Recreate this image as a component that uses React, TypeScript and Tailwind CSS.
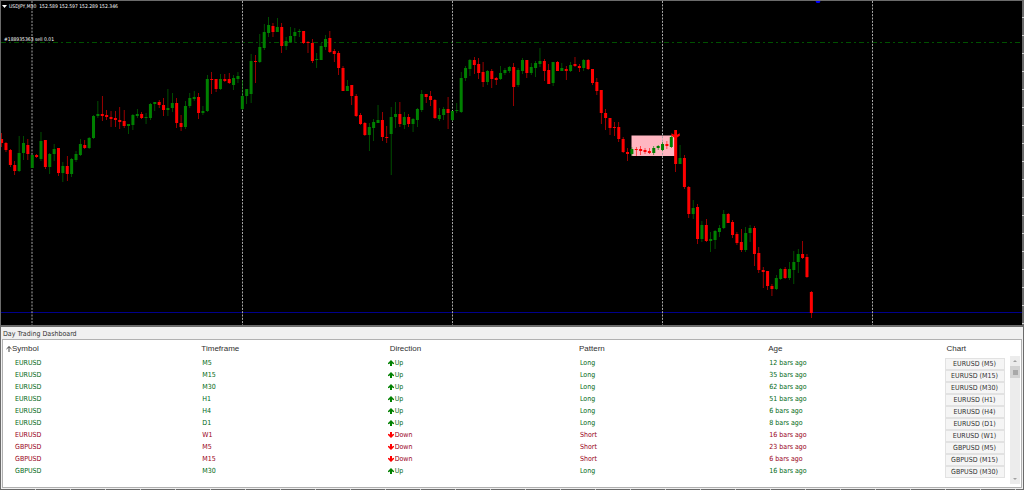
import React from 'react';

type Candle = [dir: 'u' | 'd', high: number, top: number, bottom: number, low: number];

// one entry per 30 minute bar, oldest first
const candles: Candle[] = [
  ['d', 133, 139, 143, 147], ['d', 142, 143, 150, 152], ['d', 149, 150, 165, 167], ['d', 161, 165, 171, 175],
  ['u', 136, 153, 171, 172], ['u', 136, 143, 153, 160], ['d', 139, 145, 154, 160], ['u', 155, 155, 168, 168],
  ['d', 154, 155, 157, 158], ['u', 132, 141, 159, 161], ['d', 140, 140, 167, 169], ['u', 153, 154, 167, 174],
  ['u', 144, 149, 154, 161], ['d', 148, 148, 173, 176], ['u', 162, 166, 173, 182], ['d', 156, 166, 174, 181],
  ['u', 158, 159, 174, 177], ['u', 151, 154, 160, 162], ['u', 139, 144, 155, 156], ['d', 140, 145, 148, 149],
  ['u', 137, 138, 148, 149], ['u', 115, 116, 138, 139], ['u', 101, 114, 116, 118], ['d', 96, 114, 116, 121],
  ['d', 110, 115, 117, 120], ['d', 111, 117, 119, 127], ['d', 111, 118, 120, 127], ['d', 107, 120, 122, 129],
  ['d', 110, 121, 126, 128], ['u', 124, 124, 126, 134], ['u', 114, 115, 125, 130], ['u', 109, 114, 116, 118],
  ['d', 112, 114, 118, 119], ['u', 113, 117, 118, 124], ['u', 103, 104, 118, 120], ['u', 102, 102, 104, 111],
  ['d', 100, 102, 105, 108], ['d', 98, 105, 110, 116], ['u', 89, 108, 110, 116], ['u', 93, 103, 108, 112],
  ['d', 98, 103, 123, 128], ['d', 115, 123, 127, 131], ['u', 101, 106, 127, 129], ['u', 93, 98, 106, 108],
  ['u', 91, 97, 99, 101], ['d', 93, 97, 113, 119], ['u', 106, 111, 113, 115], ['u', 75, 79, 111, 112],
  ['d', 72, 79, 80, 94], ['d', 79, 79, 89, 92], ['u', 74, 79, 89, 90], ['d', 74, 79, 81, 82],
  ['d', 73, 79, 83, 84], ['u', 75, 78, 85, 90], ['u', 72, 76, 79, 83], ['u', 80, 96, 109, 110],
  ['u', 89, 89, 96, 104], ['u', 54, 61, 94, 103], ['d', 55, 61, 62, 83], ['u', 34, 47, 62, 63],
  ['u', 24, 32, 48, 50], ['u', 17, 25, 33, 37], ['d', 23, 26, 32, 37], ['u', 18, 27, 32, 32],
  ['d', 23, 27, 46, 53], ['u', 37, 41, 46, 50], ['u', 27, 36, 42, 43], ['u', 28, 32, 36, 43],
  ['u', 29, 31, 32, 37], ['d', 31, 31, 43, 44], ['d', 41, 42, 43, 53], ['d', 39, 43, 61, 63],
  ['u', 53, 59, 60, 68], ['u', 43, 46, 60, 60], ['u', 35, 39, 47, 50], ['d', 31, 38, 52, 53],
  ['d', 49, 51, 54, 62], ['d', 51, 53, 68, 75], ['d', 66, 68, 91, 91], ['u', 80, 86, 91, 91],
  ['d', 85, 85, 96, 105], ['d', 94, 96, 116, 117], ['d', 113, 115, 124, 125], ['d', 122, 123, 135, 136],
  ['u', 123, 127, 135, 151], ['u', 119, 122, 128, 141], ['u', 105, 120, 123, 123], ['d', 112, 120, 137, 141],
  ['d', 126, 137, 138, 143], ['u', 107, 117, 134, 175], ['u', 102, 114, 117, 128], ['d', 102, 114, 124, 127],
  ['u', 112, 117, 125, 129], ['d', 114, 117, 124, 127], ['u', 118, 119, 124, 132], ['u', 108, 109, 120, 127],
  ['u', 90, 94, 110, 112], ['d', 94, 94, 97, 103], ['d', 91, 96, 100, 106], ['d', 99, 100, 118, 119],
  ['u', 108, 115, 119, 121], ['u', 107, 109, 115, 120], ['d', 97, 109, 113, 129], ['u', 111, 111, 120, 121],
  ['u', 103, 110, 111, 113], ['u', 72, 78, 112, 113], ['u', 66, 68, 78, 81], ['u', 59, 60, 69, 76],
  ['d', 57, 60, 65, 74], ['d', 58, 64, 73, 79], ['d', 62, 72, 82, 87], ['u', 70, 71, 82, 85],
  ['d', 69, 71, 79, 88], ['d', 77, 78, 80, 85], ['u', 66, 73, 79, 80], ['u', 68, 70, 73, 75],
  ['u', 66, 67, 71, 73], ['d', 63, 67, 87, 106], ['u', 68, 70, 85, 87], ['u', 58, 60, 71, 74],
  ['d', 60, 60, 73, 78], ['u', 63, 67, 73, 75], ['u', 61, 63, 68, 77], ['u', 48, 61, 64, 67],
  ['d', 59, 61, 71, 81], ['d', 64, 70, 84, 84], ['u', 62, 62, 83, 86], ['d', 61, 62, 71, 71],
  ['u', 63, 68, 71, 71], ['d', 66, 69, 71, 80], ['u', 62, 65, 71, 72], ['d', 57, 64, 66, 67],
  ['d', 64, 66, 68, 72], ['u', 59, 60, 68, 71], ['d', 59, 60, 69, 70], ['d', 69, 69, 83, 85],
  ['d', 78, 82, 91, 95], ['d', 90, 90, 113, 124], ['d', 109, 113, 118, 130], ['d', 118, 118, 128, 135],
  ['d', 122, 127, 128, 136], ['d', 122, 127, 139, 142], ['d', 137, 139, 152, 153], ['d', 148, 152, 154, 161],
  ['u', 147, 149, 154, 156], ['d', 147, 149, 150, 156], ['d', 146, 149, 151, 155], ['d', 148, 150, 152, 154],
  ['d', 148, 151, 153, 154], ['u', 146, 148, 153, 155], ['u', 145, 146, 148, 150], ['u', 142, 144, 150, 151],
  ['d', 141, 144, 146, 149], ['u', 136, 137, 147, 148], ['d', 130, 137, 164, 172], ['u', 145, 158, 164, 164],
  ['d', 155, 158, 187, 189], ['d', 186, 187, 214, 218], ['u', 200, 208, 214, 219], ['d', 204, 207, 239, 244],
  ['u', 221, 225, 239, 242], ['d', 219, 225, 241, 242], ['u', 232, 239, 241, 252], ['u', 230, 231, 240, 249],
  ['u', 225, 228, 232, 237], ['u', 210, 214, 228, 229], ['d', 213, 214, 223, 223], ['d', 220, 222, 235, 238],
  ['d', 232, 234, 243, 245], ['d', 229, 242, 250, 252], ['u', 227, 233, 250, 252], ['u', 225, 228, 233, 242],
  ['d', 226, 228, 254, 266], ['d', 247, 253, 270, 273], ['d', 267, 270, 272, 288], ['d', 271, 271, 286, 290],
  ['d', 284, 286, 289, 296], ['u', 275, 278, 289, 290], ['u', 268, 269, 279, 280], ['d', 267, 269, 278, 279],
  ['u', 262, 269, 278, 280], ['u', 251, 262, 270, 284], ['u', 249, 254, 262, 273], ['d', 241, 254, 258, 259],
  ['d', 254, 257, 277, 278], ['d', 291, 292, 313, 318],
];

const BAR_STEP = 4.377;
const FIRST_BAR_X = 1.6;
const dayLines = [31.5, 242, 452, 662, 872];

const signals = [
  { symbol: 'EURUSD', timeframe: 'M5', up: true, age: 12 },
  { symbol: 'EURUSD', timeframe: 'M15', up: true, age: 35 },
  { symbol: 'EURUSD', timeframe: 'M30', up: true, age: 62 },
  { symbol: 'EURUSD', timeframe: 'H1', up: true, age: 51 },
  { symbol: 'EURUSD', timeframe: 'H4', up: true, age: 6 },
  { symbol: 'EURUSD', timeframe: 'D1', up: true, age: 8 },
  { symbol: 'EURUSD', timeframe: 'W1', up: false, age: 16 },
  { symbol: 'GBPUSD', timeframe: 'M5', up: false, age: 23 },
  { symbol: 'GBPUSD', timeframe: 'M15', up: false, age: 6 },
  { symbol: 'GBPUSD', timeframe: 'M30', up: true, age: 16 },
];

const PriceChart: React.FC = () => (
  <section className="relative bg-black border-t border-l border-[#6b6b6b]">
    <svg viewBox="1 1 1023 324" className="block w-full" role="img" aria-label="USDJPY M30 price chart">
      <line x1="1" x2="1022" y1="42.5" y2="42.5" stroke="#005000" strokeDasharray="5 3 2 3" />
      <rect x="631.5" y="135.5" width="44" height="20.5" fill="#ffb6c1" />
      <line x1="1" x2="1022" y1="312.5" y2="312.5" stroke="#00008c" />
      {dayLines.map((x) => (
        <line key={x} x1={x + 0.5} x2={x + 0.5} y1="1" y2="325" stroke="#a8a8a8" strokeDasharray="2 1.3" />
      ))}
      {candles.map(([dir, high, top, bottom, low], i) => {
        const x = FIRST_BAR_X + i * BAR_STEP;
        return (
          <g key={i} fill={dir === 'u' ? '#008000' : '#ff0000'}>
            <rect x={x - 0.3} y={high} width="0.6" height={low - high} />
            <rect x={x - 1.5} y={top} width="3" height={Math.max(bottom - top, 1)} />
          </g>
        );
      })}
      <path d="M674.200 130h2.800v4.800l2.800-1.600v2.600l-4.200 2.600-4.200-2.600v-2.600l2.800 1.600z" fill="#ff0000" />
      <path d="M815.500 1h5l-1 2h-3z" fill="#0000ff" />
      <path d="M1023 1v324" stroke="#6b6b6b" strokeWidth="2" />
      <path d="M1023 17v308" stroke="#d0d0d0" strokeWidth="2" strokeDasharray="1 17" />
    </svg>
    <div className="absolute top-px left-0 font-['DejaVu_Sans_Condensed','Liberation_Sans',sans-serif] text-[5px] leading-[8px] text-white">
      <div className="flex items-center gap-[2px] pl-px">
        <svg viewBox="0 0 5 3" className="w-[5px] h-[3px]" fill="#ffffff"><path d="M0 0h5L2.500 3z" /></svg>
        <span className="whitespace-pre">{'USDJPY,M30  152.589 152.597 152.289 152.346'}</span>
      </div>
    </div>
    <div className="absolute top-[34px] left-[3px] font-['DejaVu_Sans_Condensed','Liberation_Sans',sans-serif] text-[5px] leading-[8px] text-white">
      #188935363 sell 0.01
    </div>
  </section>
);

const DirectionArrow: React.FC<{ up: boolean }> = ({ up }) => (
  <svg viewBox="0 0 6 6" className={up ? 'w-[6px] h-[6px] mb-px text-[#008000]' : 'w-[6px] h-[6px] mb-px rotate-180 text-[#ff0000]'} fill="currentColor">
    <path d="M3 0 6 3v1.300L4 3.500V6H2V3.500L0 4.300V3z" />
  </svg>
);

const SignalTable: React.FC = () => (
  <table className="grow table-fixed border-collapse text-left">
    <thead className="font-['Liberation_Sans',sans-serif] text-[8px] leading-[17px] text-[#303030]">
      <tr>
        <th className="w-[19.3%] p-0 pb-px pl-[3px] font-normal">
          <span className="flex items-center">
            <svg viewBox="0 0 6 6" className="w-[6px] h-[6px]" fill="none" stroke="#303030" strokeWidth="0.9"><path d="M3 6V.7M.5 3 3 .6 5.500 3" /></svg>
            Symbol
          </span>
        </th>
        <th className="w-[18.7%] p-0 pb-px pl-1 font-normal">Timeframe</th>
        <th className="w-[18.8%] p-0 pb-px pl-1 font-normal">Direction</th>
        <th className="w-[18.8%] p-0 pb-px pl-1 font-normal">Pattern</th>
        <th className="w-[17.8%] p-0 pb-px pl-1 font-normal">Age</th>
        <th className="p-0 pb-px pl-[3px] font-normal">Chart</th>
      </tr>
    </thead>
    <tbody className="text-[7px] leading-[11px]">
      {signals.map((s) => (
        <tr key={s.symbol + s.timeframe} className={s.up ? 'text-[#006814]' : 'text-[#980018]'}>
          <td className="p-0 pb-px pl-3">{s.symbol}</td>
          <td className="p-0 pb-px pl-[5px]">{s.timeframe}</td>
          <td className="p-0 pb-px pl-[2px]">
            <span className="flex items-center gap-px">
              <DirectionArrow up={s.up} />
              {s.up ? 'Up' : 'Down'}
            </span>
          </td>
          <td className="p-0 pb-px pl-[5px]">{s.up ? 'Long' : 'Short'}</td>
          <td className="p-0 pb-px pl-[5px]">{s.age} bars ago</td>
          <td className="p-0 pl-px">
            <button className="block w-[60px] h-[12px] border border-[#e2e2e2] bg-[#f5f5f5] text-center leading-[10px] text-[#303030]">
              {s.symbol} ({s.timeframe})
            </button>
          </td>
        </tr>
      ))}
    </tbody>
  </table>
);

const Scrollbar: React.FC = () => (
  <div className="mt-[16px] mb-[3px] mr-px w-[10px] shrink-0 flex flex-col bg-[#ececec]">
    <button aria-label="Scroll up" className="h-[10px] flex items-center justify-center">
      <svg viewBox="0 0 4 2" className="w-[4px] h-[2px]" fill="#a0a0a0"><path d="M0 2 2 0l2 2z" /></svg>
    </button>
    <div className="h-[12px] bg-[#d2d2d2] flex items-center justify-center">
      <div className="w-[5px] h-[5px] bg-[#a8a8a8]" />
    </div>
    <div className="grow" />
    <button aria-label="Scroll down" className="h-[10px] flex items-center justify-center">
      <svg viewBox="0 0 4 2" className="w-[4px] h-[2px]" fill="#a0a0a0"><path d="M0 0h4L2 2z" /></svg>
    </button>
  </div>
);

const Dashboard: React.FC = () => (
  <section className="grow flex flex-col border-t-2 border-x border-[#6b6b6b] bg-[#f0f0f0]">
    <h1 className="pt-[2px] pl-[2px] text-[7px] leading-[10px] text-[#303030]">Day Trading Dashboard</h1>
    <div className="grow flex items-stretch mx-px border border-[#b0b0b0] bg-white">
      <div className="grow flex items-start">
        <SignalTable />
      </div>
      <Scrollbar />
    </div>
    <div className="h-px mt-px bg-[repeating-linear-gradient(90deg,#6b6b6b_0_34px,#d0d0d0_34px_35px)]" />
  </section>
);

export default function App() {
  return (
    <main className="min-h-screen flex flex-col bg-black font-['DejaVu_Sans_Condensed','Noto_Sans',sans-serif]">
      <PriceChart />
      <Dashboard />
    </main>
  );
}
